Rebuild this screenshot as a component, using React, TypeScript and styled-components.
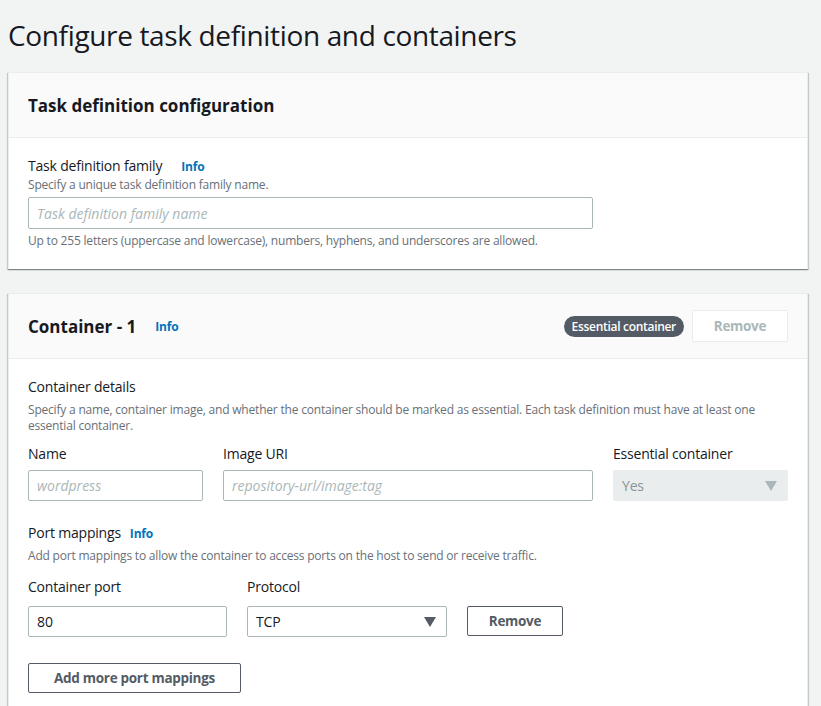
import React from "react";
import styled, { createGlobalStyle } from "styled-components";

const Global = createGlobalStyle`
  html, body { margin: 0; padding: 0; background: #f2f3f3; }
  body { font-family: "Open Sans", "Liberation Sans", sans-serif; color: #16191f; }
  * { box-sizing: border-box; }
`;

const Page = styled.div`
  width: 821px;
  height: 706px;
  overflow: hidden;
  padding: 0 13px 0 8px;
  display: flex;
  flex-direction: column;
`;

const Title = styled.h1`
  margin: 0;
  padding: 17px 0 19px;
  font-size: 28px;
  line-height: 36px;
  font-weight: 400;
  letter-spacing: -0.35px;
  color: #16191f;
`;

const Panel = styled.section`
  background: #fff;
  border: 1px solid #eaeded;
  border-bottom: none;
  box-shadow: 0 1px 1px 0 rgba(0, 28, 36, 0.3), 1px 1px 1px 0 rgba(0, 28, 36, 0.15),
    -1px 1px 1px 0 rgba(0, 28, 36, 0.15);
  margin-bottom: 24px;
  flex-shrink: 0;
`;

const PanelHeader = styled.div`
  background: #fafafa;
  border-bottom: 1px solid #eaeded;
  height: 65px;
  padding: 0 19px;
  display: flex;
  align-items: center;
  gap: 8px;
`;

const PanelTitle = styled.h2`
  margin: 0;
  font-size: 17px;
  font-weight: 700;
  letter-spacing: 0;
  color: #16191f;
`;

const Spacer = styled.div`
  flex: 1;
`;

const InfoLink = styled.a<{ $gap?: number }>`
  font-size: 12px;
  font-weight: 700;
  color: #0073bb;
  text-decoration: none;
  margin-left: ${(p) => p.$gap ?? 0}px;
  letter-spacing: -0.2px;
`;

const Badge = styled.span`
  background: #545b64;
  color: #fff;
  font-size: 12px;
  font-weight: 600;
  letter-spacing: -0.3px;
  height: 21px;
  line-height: 21px;
  padding: 0 8px;
  border-radius: 11px;
`;

const Button = styled.button<{ $disabled?: boolean; $w?: number }>`
  height: ${(p) => (p.$disabled ? 32 : 30)}px;
  width: ${(p) => p.$w ?? 96}px;
  border: 1px solid ${(p) => (p.$disabled ? "#eaeded" : "#545b64")};
  border-radius: 2px;
  background: #fff;
  color: ${(p) => (p.$disabled ? "#aab7b8" : "#545b64")};
  font-family: inherit;
  font-size: 13.5px;
  font-weight: 700;
  letter-spacing: -0.3px;
  padding: 0;
  cursor: pointer;
  flex-shrink: 0;
`;

const PanelBody = styled.div<{ $pt: number; $pb: number }>`
  padding: ${(p) => p.$pt}px 19px ${(p) => p.$pb}px;
  display: flex;
  flex-direction: column;
`;

const Label = styled.div`
  font-size: 14px;
  line-height: 20px;
  letter-spacing: -0.2px;
  color: #16191f;
  display: flex;
  align-items: baseline;
`;

const Desc = styled.div<{ $mt?: number }>`
  font-size: 12px;
  line-height: 16px;
  letter-spacing: -0.2px;
  color: #687078;
  margin-top: ${(p) => p.$mt ?? 0}px;
`;

const TextInput = styled.input<{ $w: number; $h?: number; $mt?: number }>`
  width: ${(p) => p.$w}px;
  height: ${(p) => p.$h ?? 32}px;
  margin-top: ${(p) => p.$mt ?? 0}px;
  border: 1px solid #aab7b8;
  border-radius: 2px;
  padding: 0 8px;
  font-family: inherit;
  font-size: 14px;
  letter-spacing: 0;
  color: #16191f;
  background: #fff;
  outline: none;
  &::placeholder {
    color: #aab7b8;
    font-style: italic;
  }
`;

const Select = styled.div<{ $w: number; $disabled?: boolean }>`
  width: ${(p) => p.$w}px;
  height: 31px;
  border: 1px solid ${(p) => (p.$disabled ? "#eaeded" : "#aab7b8")};
  background: ${(p) => (p.$disabled ? "#eaeded" : "#fff")};
  color: ${(p) => (p.$disabled ? "#879596" : "#16191f")};
  border-radius: 2px;
  padding: 0 10px 0 8px;
  display: flex;
  align-items: center;
  justify-content: space-between;
  font-size: 14px;
  letter-spacing: -0.2px;
`;

const Arrow = styled.span<{ $disabled?: boolean }>`
  width: 0;
  height: 0;
  border-left: 6px solid transparent;
  border-right: 6px solid transparent;
  border-top: 10px solid ${(p) => (p.$disabled ? "#aab7b8" : "#545b64")};
`;

const Row = styled.div<{ $mt?: number; $gap: number }>`
  display: flex;
  align-items: flex-end;
  gap: ${(p) => p.$gap}px;
  margin-top: ${(p) => p.$mt ?? 0}px;
`;

const Field = styled.div<{ $grow?: boolean; $gap?: number }>`
  display: flex;
  flex-direction: column;
  gap: ${(p) => p.$gap ?? 6}px;
  ${(p) => (p.$grow ? "flex: 1;" : "")}
`;

const Section = styled.div<{ $mt?: number }>`
  margin-top: ${(p) => p.$mt ?? 0}px;
  display: flex;
  flex-direction: column;
`;

export default function App() {
  return (
    <>
      <Global />
      <Page>
        <Title>Configure task definition and containers</Title>
        <Panel>
          <PanelHeader>
            <PanelTitle>Task definition configuration</PanelTitle>
          </PanelHeader>
          <PanelBody $pt={18} $pb={20}>
            <Label>
              Task definition family
              <InfoLink $gap={19}>Info</InfoLink>
            </Label>
            <Desc $mt={0}>Specify a unique task definition family name.</Desc>
            <TextInput $w={565} $h={32} $mt={4} placeholder="Task definition family name" />
            <Desc $mt={4}>
              Up to 255 letters (uppercase and lowercase), numbers, hyphens, and underscores are allowed.
            </Desc>
          </PanelBody>
        </Panel>
        <Panel>
          <PanelHeader>
            <PanelTitle>Container - 1</PanelTitle>
            <InfoLink $gap={11}>Info</InfoLink>
            <Spacer />
            <Badge>Essential container</Badge>
            <Button $disabled $w={96}>Remove</Button>
          </PanelHeader>
          <PanelBody $pt={18} $pb={30}>
            <Section>
              <Label>Container details</Label>
              <Desc $mt={5}>
                Specify a name, container image, and whether the container should be marked as essential. Each task
                definition must have at least one essential container.
              </Desc>
            </Section>
            <Row $mt={10} $gap={20}>
              <Field>
                <Label>Name</Label>
                <TextInput $w={175} $h={31} placeholder="wordpress" />
              </Field>
              <Field $grow>
                <Label>Image URI</Label>
                <TextInput $w={370} $h={31} placeholder="repository-url/image:tag" />
              </Field>
              <Field>
                <Label>Essential container</Label>
                <Select $w={175} $disabled>
                  Yes
                  <Arrow $disabled />
                </Select>
              </Field>
            </Row>
            <Section $mt={22}>
              <Label>
                Port mappings
                <InfoLink $gap={9}>Info</InfoLink>
              </Label>
              <Desc $mt={4}>Add port mappings to allow the container to access ports on the host to send or receive traffic.</Desc>
            </Section>
            <Row $mt={13} $gap={20}>
              <Field $gap={9}>
                <Label>Container port</Label>
                <TextInput $w={199} $h={31} defaultValue="80" />
              </Field>
              <Field $gap={9}>
                <Label>Protocol</Label>
                <Select $w={200}>
                  TCP
                  <Arrow />
                </Select>
              </Field>
              <Button $w={96} style={{ marginBottom: 1 }}>Remove</Button>
            </Row>
            <Row $mt={26} $gap={0}>
              <Button $w={213}>Add more port mappings</Button>
            </Row>
          </PanelBody>
        </Panel>
      </Page>
    </>
  );
}
